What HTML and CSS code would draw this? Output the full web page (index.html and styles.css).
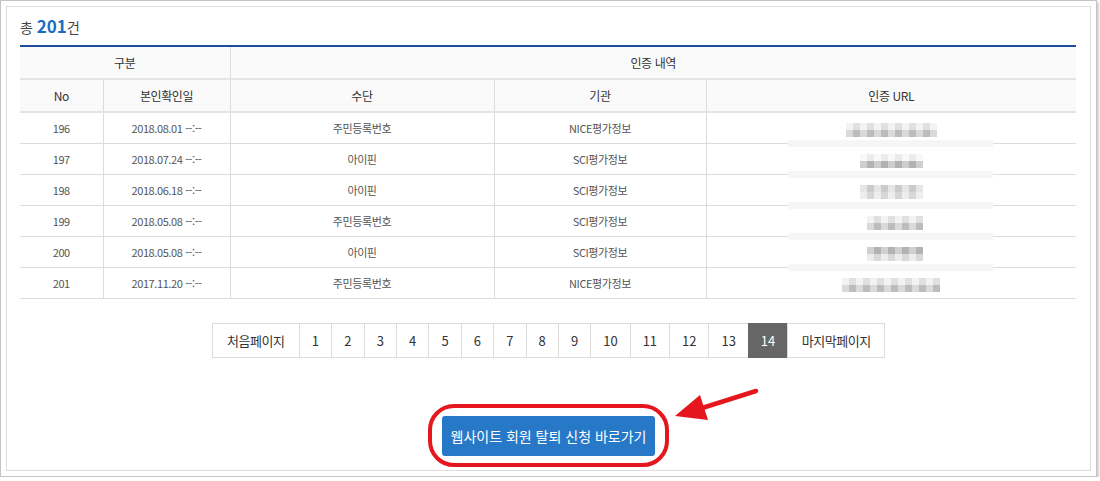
FILE: index.html
```html
<!DOCTYPE html>
<html lang="ko">
<head>
  <meta charset="UTF-8">
  <title>본인확인 내역</title>
  <link rel="stylesheet" href="styles.css">
</head>
<body>
<div class="shot">
  <div class="panel">
    <div class="total">총 <strong>201</strong>건</div>

    <table class="list">
      <colgroup>
        <col style="width:83px">
        <col style="width:127px">
        <col style="width:264px">
        <col style="width:212px">
        <col style="width:370px">
      </colgroup>
      <thead>
        <tr class="head1">
          <th colspan="2">구분</th>
          <th colspan="3" class="first-group">인증 내역</th>
        </tr>
        <tr class="head2">
          <th>No</th>
          <th>본인확인일</th>
          <th>수단</th>
          <th>기관</th>
          <th>인증 URL</th>
        </tr>
      </thead>
      <tbody>
        <tr>
          <td>196</td><td>2018.08.01 --:--</td><td>주민등록번호</td><td>NICE평가정보</td>
          <td class="url"><span class="mosaic m-wide"></span></td>
        </tr>
        <tr>
          <td>197</td><td>2018.07.24 --:--</td><td>아이핀</td><td>SCI평가정보</td>
          <td class="url band"><span class="mosaic m-low"></span></td>
        </tr>
        <tr>
          <td>198</td><td>2018.06.18 --:--</td><td>아이핀</td><td>SCI평가정보</td>
          <td class="url band"><span class="mosaic m-light"></span></td>
        </tr>
        <tr>
          <td>199</td><td>2018.05.08 --:--</td><td>주민등록번호</td><td>SCI평가정보</td>
          <td class="url band"><span class="mosaic m-short"></span></td>
        </tr>
        <tr>
          <td>200</td><td>2018.05.08 --:--</td><td>아이핀</td><td>SCI평가정보</td>
          <td class="url band"><span class="mosaic m-short m-flip"></span></td>
        </tr>
        <tr>
          <td>201</td><td>2017.11.20 --:--</td><td>주민등록번호</td><td>NICE평가정보</td>
          <td class="url band"><span class="mosaic m-wide m-long"></span></td>
        </tr>
      </tbody>
    </table>

    <div class="paging">
      <a class="pg-text first">처음페이지</a>
      <a>1</a><a>2</a><a>3</a><a>4</a><a>5</a><a>6</a><a>7</a><a>8</a><a>9</a>
      <a class="two">10</a><a class="two">11</a><a class="two">12</a><a class="two">13</a>
      <a class="two active">14</a>
      <a class="pg-text last">마지막페이지</a>
    </div>

    <div class="btn-area">
      <div class="btn-ring">
        <button class="leave-btn">웹사이트 회원 탈퇴 신청 바로가기</button>
        <svg class="arrow" width="95" height="50" viewBox="0 0 95 50">
          <line x1="87" y1="7" x2="30" y2="25" stroke="#e5161e" stroke-width="4.5" stroke-linecap="round"/>
          <polygon points="6,32 31,11 39,36" fill="#e5161e"/>
        </svg>
      </div>
    </div>
  </div>
</div>
</body>
</html>
```

FILE: styles.css
```css
body {
  margin: 0;
  background: #fff;
  font-family: "Noto Sans CJK KR", "Noto Sans", sans-serif;
  color: #333;
}
.shot {
  width: 1095px;
  height: 475px;
  border: 1px solid #c4c4c4;
  box-shadow: 2px 2px 2px #cfcfcf;
}
.panel {
  margin: 5px;
  height: 463px;
  border: 1px solid #dcdcdc;
  padding: 0 13px;
  background: #fff;
}
.total {
  height: 38px;
  line-height: 38px;
  font-size: 14px;
  color: #444;
}
.total strong {
  font-size: 17px;
  color: #1a6cc1;
  font-weight: bold;
}

.list {
  width: 1056px;
  border-collapse: collapse;
  table-layout: fixed;
  border-top: 2px solid #1d4c9a;
}
.list th {
  height: 31px;
  padding: 0;
  background: #fafafa;
  font-size: 12px;
  font-weight: normal;
  color: #333;
  letter-spacing: -0.4px;
  border-bottom: 2px solid #e4e4e4;
  border-left: 1px solid #dcdcdc;
}
.list td {
  height: 30px;
  padding: 0;
  text-align: center;
  font-size: 11px;
  color: #555;
  letter-spacing: -0.4px;
  border-bottom: 1px solid #dcdcdc;
  border-left: 1px solid #dcdcdc;
}
.list tr > :first-child { border-left: none; }
.list .head1 th.first-group { border-left: 1px solid #dcdcdc; }

.url { position: relative; }
.band::before {
  content: "";
  position: absolute;
  top: -4px;
  left: 50%;
  width: 205px;
  margin-left: -103px;
  height: 7px;
  background: #f6f6f6;
}
.mosaic {
  position: relative;
  display: inline-block;
  vertical-align: middle;
  width: 63px;
  height: 14px;
  background:
    repeating-linear-gradient(90deg, rgba(255,255,255,.35) 0 7px, rgba(0,0,0,.05) 7px 14px),
    linear-gradient(#ececec 0 50%, #c6c6c6 50% 100%);
}
.m-wide { width: 91px; }
.m-long { width: 98px; }
.m-short { width: 56px; margin-left: 7px; }
.m-low {
  background:
    repeating-linear-gradient(90deg, rgba(255,255,255,.3) 0 7px, rgba(0,0,0,.04) 7px 14px),
    linear-gradient(#f5f5f5 0 50%, #b9b9b9 50% 100%);
}
.m-light {
  background:
    repeating-linear-gradient(90deg, rgba(255,255,255,.4) 0 7px, rgba(0,0,0,.05) 7px 14px),
    linear-gradient(#d6d6d6 0 50%, #e2e2e2 50% 100%);
}
.m-flip {
  background:
    repeating-linear-gradient(90deg, rgba(255,255,255,.3) 0 7px, rgba(0,0,0,.05) 7px 14px),
    linear-gradient(#bcbcbc 0 50%, #e4e4e4 50% 100%);
}

.paging {
  display: flex;
  justify-content: center;
  margin-top: 24px;
}
.paging a {
  box-sizing: border-box;
  height: 35px;
  line-height: 33px;
  width: 33.4px;
  margin-left: -1px;
  border: 1px solid #dcdcdc;
  text-align: center;
  font-size: 13px;
  color: #333;
  background: #fff;
}
.paging a.two { width: 40.4px; }
.paging a.first { width: 88px; margin-left: 0; letter-spacing: -0.5px; }
.paging a.last { width: 98px; letter-spacing: -0.5px; }
.paging a.active {
  background: #666;
  border-color: #666;
  color: #fff;
}

.btn-area {
  display: flex;
  justify-content: center;
  margin-top: 46px;
}
.btn-ring {
  position: relative;
  box-sizing: border-box;
  width: 241px;
  height: 63px;
  border: 4px solid #e5161e;
  border-radius: 26px;
  display: flex;
  align-items: center;
  justify-content: center;
}
.leave-btn {
  width: 213px;
  height: 40px;
  border: none;
  border-radius: 3px;
  background: #2878c8;
  color: #fff;
  font-family: "Noto Sans CJK KR", "Noto Sans", sans-serif;
  font-size: 14px;
  cursor: pointer;
}
.arrow {
  position: absolute;
  left: 237px;
  top: -24px;
}
```
